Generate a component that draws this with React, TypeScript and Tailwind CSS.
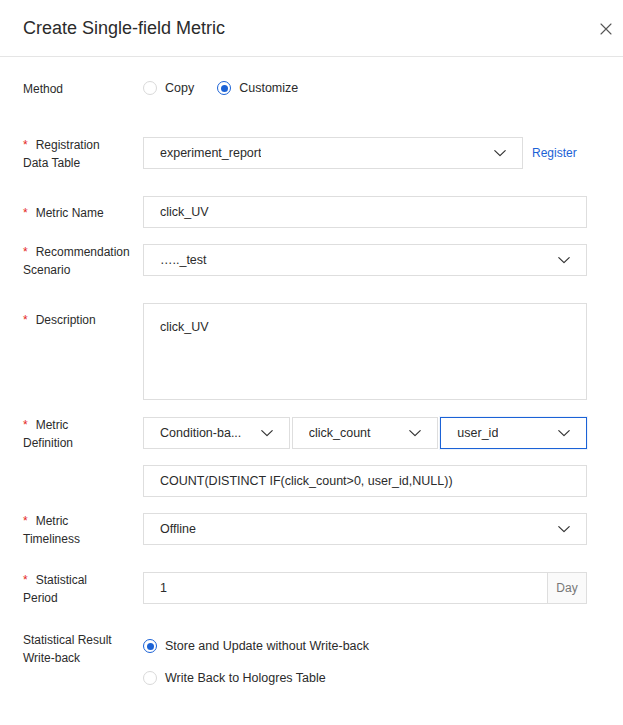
import React from "react";

function Chevron() {
  return (
    <svg width="12" height="12" viewBox="0 0 12 12" fill="none" className="shrink-0">
      <path d="M0.8 3.6 L6 8.6 L11.2 3.6" stroke="#333" strokeWidth="1.2" strokeLinecap="round" strokeLinejoin="round" />
    </svg>
  );
}

function Radio({ checked, label }: { checked?: boolean; label: string }) {
  return (
    <div className="flex items-center h-[32px]">
      {checked ? (
        <div className="w-[14px] h-[14px] rounded-full border-[1.5px] border-[#1b62d6] flex items-center justify-center bg-white">
          <div className="w-[7px] h-[7px] rounded-full bg-[#1b62d6]" />
        </div>
      ) : (
        <div className="w-[14px] h-[14px] rounded-full border border-[#d9d9d9] bg-white" />
      )}
      <span className="ml-[8px] text-[12.5px] text-[#2b2b2b]">{label}</span>
    </div>
  );
}

function Label({ text, required, shift = "" }: { text: string; required?: boolean; shift?: string }) {
  return (
    <div className={"w-[120px] shrink-0 flex items-center h-[32px] self-start " + shift}>
      <div className="w-[96px] text-[12px] leading-[18px] text-[#2b2b2b] mt-[-1px] mb-[-3px]">
        {required && <span className="text-[#e5261b] mr-[8px]">*</span>}
        {text}
      </div>
    </div>
  );
}

function Select({ value, focused, className = "" }: { value: string; focused?: boolean; className?: string }) {
  return (
    <div
      className={
        "h-[32px] flex items-center justify-between pl-[16px] pr-[16px] bg-white border " +
        (focused ? "border-[#1b62d6] shadow-[0_0_0_1px_rgba(27,98,214,0.08)] " : "border-[#dedede] ") +
        className
      }
    >
      <span className="text-[12.5px] text-[#2b2b2b] truncate">{value}</span>
      <Chevron />
    </div>
  );
}

function Input({ value }: { value: string }) {
  return (
    <div className="h-[32px] flex items-center px-[16px] bg-white border border-[#dedede]">
      <span className="text-[12.5px] text-[#2b2b2b]">{value}</span>
    </div>
  );
}

export default function App() {
  return (
    <div
      className="w-[623px] h-[725px] bg-white overflow-hidden"
      style={{ fontFamily: '"Liberation Sans", Arial, Helvetica, sans-serif' }}
    >
      {/* Header */}
      <div className="h-[57px] flex items-center justify-between pl-[23px] pr-[11px] pt-[1px] border-b border-[#e5e5e5]">
        <div className="text-[18px] text-[#2b2b2b]">Create Single-field Metric</div>
        <svg width="12" height="12" viewBox="0 0 12 12" fill="none">
          <path d="M1 1 L11 11 M11 1 L1 11" stroke="#555" strokeWidth="1.1" strokeLinecap="round" />
        </svg>
      </div>

      {/* Body */}
      <div className="pl-[23px] pt-[15px]">
        {/* Method */}
        <div className="flex">
          <Label text="Method" />
          <div className="flex items-center gap-[23px]">
            <Radio label="Copy" />
            <Radio checked label="Customize" />
          </div>
        </div>

        {/* Registration */}
        <div className="flex mt-[33px]">
          <Label text="Registration Data Table" required />
          <div className="flex items-center">
            <Select value="experiment_report" className="w-[380px]" />
            <span className="ml-[9px] text-[12px] text-[#1b62d6]">Register</span>
          </div>
        </div>

        {/* Metric Name */}
        <div className="flex mt-[27px]">
          <Label text="Metric Name" required />
          <div className="w-[444px]">
            <Input value="click_UV" />
          </div>
        </div>

        {/* Recommendation Scenario */}
        <div className="flex mt-[16px]">
          <Label text="Recommendation Scenario" required />
          <div className="w-[444px]">
            <Select value="….._test" />
          </div>
        </div>

        {/* Description */}
        <div className="flex mt-[27px]">
          <Label text="Description" required />
          <div className="w-[444px] h-[97px] border border-[#dedede] px-[16px] pt-[10px]">
            <span className="text-[12.5px] leading-[20px] text-[#2b2b2b]">click_UV</span>
          </div>
        </div>

        {/* Metric Definition */}
        <div className="flex mt-[17px]">
          <Label text="Metric Definition" required />
          <div className="w-[444px] flex flex-col gap-[16px]">
            <div className="flex gap-[2px]">
              <Select value="Condition-ba..." className="flex-1 min-w-0" />
              <Select value="click_count" className="flex-1 min-w-0" />
              <Select value="user_id" focused className="flex-1 min-w-0" />
            </div>
            <Input value="COUNT(DISTINCT IF(click_count>0, user_id,NULL))" />
          </div>
        </div>

        {/* Metric Timeliness */}
        <div className="flex mt-[16px]">
          <Label text="Metric Timeliness" required />
          <div className="w-[444px]">
            <Select value="Offline" />
          </div>
        </div>

        {/* Statistical Period */}
        <div className="flex mt-[27px]">
          <Label text="Statistical Period" required />
          <div className="w-[444px] h-[32px] flex border border-[#dedede]">
            <div className="flex-1 flex items-center px-[16px]">
              <span className="text-[12.5px] text-[#2b2b2b]">1</span>
            </div>
            <div className="w-[39px] flex items-center justify-center border-l border-[#dedede] bg-[#fafafa]">
              <span className="text-[12px] text-[#777]">Day</span>
            </div>
          </div>
        </div>

        {/* Write-back */}
        <div className="flex mt-[26px]">
          <Label text="Statistical Result Write-back" shift="mt-[2px]" />
          <div className="flex flex-col">
            <Radio checked label="Store and Update without Write-back" />
            <Radio label="Write Back to Hologres Table" />
          </div>
        </div>
      </div>
    </div>
  );
}
